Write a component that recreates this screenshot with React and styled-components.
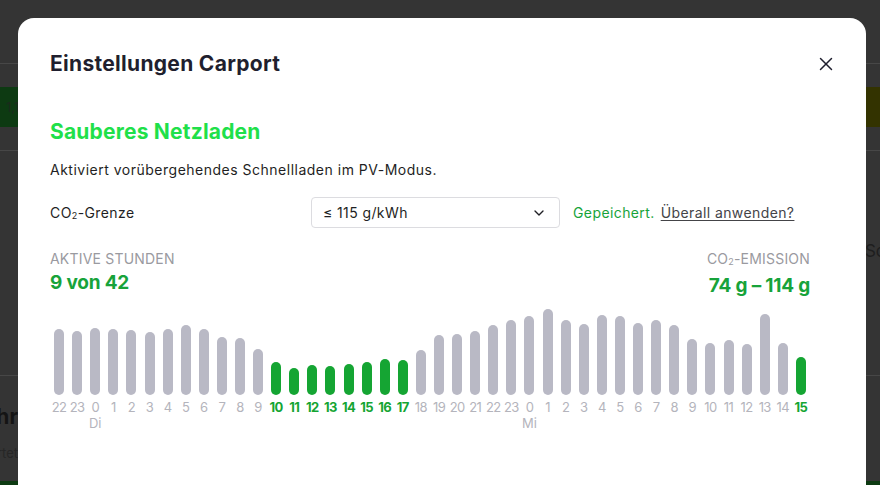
import React from "react";
import styled, { createGlobalStyle } from "styled-components";
import { X, ChevronDown } from "lucide-react";

const hours = [
  { h: "22", v: 66 },
  { h: "23", v: 64 },
  { h: "0", v: 67, day: "Di" },
  { h: "1", v: 66 },
  { h: "2", v: 65 },
  { h: "3", v: 63 },
  { h: "4", v: 66 },
  { h: "5", v: 70 },
  { h: "6", v: 66 },
  { h: "7", v: 58 },
  { h: "8", v: 57 },
  { h: "9", v: 46 },
  { h: "10", v: 33, on: true },
  { h: "11", v: 27, on: true },
  { h: "12", v: 30, on: true },
  { h: "13", v: 29, on: true },
  { h: "14", v: 31, on: true },
  { h: "15", v: 33, on: true },
  { h: "16", v: 36, on: true },
  { h: "17", v: 35, on: true },
  { h: "18", v: 45 },
  { h: "19", v: 60 },
  { h: "20", v: 61 },
  { h: "21", v: 64 },
  { h: "22", v: 70 },
  { h: "23", v: 75 },
  { h: "0", v: 79, day: "Mi" },
  { h: "1", v: 86 },
  { h: "2", v: 75 },
  { h: "3", v: 71 },
  { h: "4", v: 80 },
  { h: "5", v: 79 },
  { h: "6", v: 72 },
  { h: "7", v: 75 },
  { h: "8", v: 70 },
  { h: "9", v: 56 },
  { h: "10", v: 52 },
  { h: "11", v: 55 },
  { h: "12", v: 51 },
  { h: "13", v: 81 },
  { h: "14", v: 52 },
  { h: "15", v: 38, on: true },
];

const App = () => {
  return (
    <>
      <GlobalStyle />
      <Page>
        <PageTop />
        <PageBand>
          <BandLeft>
            <BandText>1,1</BandText>
          </BandLeft>
          <BandRight />
        </PageBand>
        <PageSection>
          <SideText>So</SideText>
        </PageSection>
        <PageFooter>
          <EdgeText $bold>Fahr</EdgeText>
          <EdgeText>Wartet</EdgeText>
          <FooterBar />
        </PageFooter>
      </Page>

      <Overlay>
        <Modal>
          <ModalHeader>
            <ModalTitle>Einstellungen Carport</ModalTitle>
            <CloseButton>
              <X size={22} strokeWidth={1.6} />
            </CloseButton>
          </ModalHeader>

          <ModalBody>
            <SectionTitle>Sauberes Netzladen</SectionTitle>
            <Description>
              Aktiviert vorübergehendes Schnellladen im PV-Modus.
            </Description>

            <SettingRow>
              <SettingLabel>
                CO<Sub>2</Sub>-Grenze
              </SettingLabel>
              <SelectBox>
                <span>≤ 115 g/kWh</span>
                <ChevronDown size={16} strokeWidth={2} />
              </SelectBox>
              <SavedText>Gepeichert.</SavedText>
              <ApplyLink>Überall anwenden?</ApplyLink>
            </SettingRow>

            <StatsRow>
              <Stat>
                <StatLabel>AKTIVE STUNDEN</StatLabel>
                <StatValue>9 von 42</StatValue>
              </Stat>
              <Stat $right>
                <StatLabel>
                  CO<Sub>2</Sub>-EMISSION
                </StatLabel>
                <StatValue>74 g – 114 g</StatValue>
              </Stat>
            </StatsRow>

            <Chart>
              {hours.map((item, i) => (
                <Column key={i}>
                  <BarArea>
                    <Bar $on={item.on} style={{ height: item.v }} />
                  </BarArea>
                  <HourLabel $on={item.on}>{item.h}</HourLabel>
                  <DayLabel>{item.day || ""}</DayLabel>
                </Column>
              ))}
            </Chart>
          </ModalBody>
        </Modal>
      </Overlay>
    </>
  );
};

export default App;

const GlobalStyle = createGlobalStyle`
  html, body {
    margin: 0;
    padding: 0;
    background: #343434;
    overflow: hidden;
  }
  body {
    font-family: Inter, "Open Sans", sans-serif;
  }
`;

//--------background page------------------------

const Page = styled.div`
  height: 485px;
  background: #343434;
  display: flex;
  flex-direction: column;
`;

const PageTop = styled.div`
  height: 63px;
  border-bottom: 1px solid #474747;
`;

const PageBand = styled.div`
  margin-top: 23px;
  height: 40px;
  display: flex;
`;

const BandLeft = styled.div`
  flex: 1;
  background: #0d3a12;
  display: flex;
  align-items: center;
  padding-left: 6px;
`;

const BandRight = styled.div`
  flex: 1;
  background: #333300;
`;

const BandText = styled.span`
  font-size: 13px;
  color: #1c2a1c;
`;

const PageSection = styled.div`
  margin-top: 23px;
  border-top: 1px solid #474747;
  height: 225px;
  display: flex;
  justify-content: flex-end;
  align-items: flex-start;
  padding-top: 90px;
  box-sizing: border-box;
`;

const SideText = styled.span`
  font-size: 17px;
  color: #1e1e1e;
  margin-right: -6px;
`;

const PageFooter = styled.div`
  border-top: 1px solid #474747;
  flex: 1;
  display: flex;
  flex-direction: column;
`;

const EdgeText = styled.div`
  width: 18px;
  display: flex;
  justify-content: flex-end;
  white-space: nowrap;
  margin-top: ${(p) => (p.$bold ? "28px" : "16px")};
  font-size: ${(p) => (p.$bold ? "21px" : "13px")};
  font-weight: ${(p) => (p.$bold ? 700 : 400)};
  color: ${(p) => (p.$bold ? "#141414" : "#262626")};
`;

const FooterBar = styled.div`
  margin-top: auto;
  height: 4px;
  background: #0d3a12;
`;

//--------modal------------------------

const Overlay = styled.div`
  position: fixed;
  inset: 0;
  display: flex;
  justify-content: center;
  align-items: flex-start;
  padding-top: 18px;
`;

const Modal = styled.div`
  width: 848px;
  height: 520px;
  margin-left: 4px;
  background: #ffffff;
  border-radius: 16px;
  box-sizing: border-box;
`;

const ModalHeader = styled.div`
  display: flex;
  justify-content: space-between;
  align-items: center;
  padding: 32px 32px 0 32px;
`;

const ModalTitle = styled.h2`
  margin: 0;
  font-size: 21px;
  line-height: 28px;
  font-weight: 700;
  color: #1f1f2e;
  letter-spacing: 0.3px;
`;

const CloseButton = styled.button`
  display: flex;
  align-items: center;
  justify-content: center;
  width: 24px;
  height: 24px;
  padding: 0;
  margin-right: -4px;
  border: none;
  background: none;
  color: #1f1f2e;
  cursor: pointer;
`;

const ModalBody = styled.div`
  padding: 40px 56px 0 32px;
  display: flex;
  flex-direction: column;
`;

const SectionTitle = styled.h3`
  margin: 0;
  font-size: 21px;
  line-height: 28px;
  font-weight: 700;
  color: #1fe04a;
  letter-spacing: 0.2px;
`;

const Description = styled.p`
  margin: 14px 0 0 0;
  font-size: 14px;
  line-height: 20px;
  letter-spacing: 0.5px;
  color: #1f1f24;
`;

const SettingRow = styled.div`
  display: flex;
  align-items: center;
  margin-top: 17px;
  font-size: 14px;
  letter-spacing: 0.4px;
`;

const SettingLabel = styled.span`
  width: 261px;
  color: #1f1f24;
`;

const Sub = styled.sub`
  font-size: 9px;
  vertical-align: -1px;
`;

const SelectBox = styled.div`
  width: 249px;
  height: 31px;
  box-sizing: border-box;
  border: 1px solid #dcdce0;
  border-radius: 4px;
  display: flex;
  align-items: center;
  justify-content: space-between;
  padding: 0 12px 0 11px;
  color: #1f1f24;
`;

const SavedText = styled.span`
  margin-left: 13px;
  color: #17a33a;
`;

const ApplyLink = styled.a`
  margin-left: 6px;
  color: #444448;
  text-decoration: underline;
  text-underline-offset: 2px;
  cursor: pointer;
`;

const StatsRow = styled.div`
  display: flex;
  justify-content: space-between;
  margin-top: 21px;
`;

const Stat = styled.div`
  display: flex;
  flex-direction: column;
  align-items: ${(p) => (p.$right ? "flex-end" : "flex-start")};
`;

const StatLabel = styled.span`
  font-size: 14px;
  line-height: 20px;
  letter-spacing: 0.2px;
  color: #9a9aa0;
`;

const StatValue = styled.span`
  margin-top: 2px;
  font-size: 19px;
  line-height: 24px;
  font-weight: 700;
  color: #17a33a;
  letter-spacing: -0.2px;
`;

//--------chart------------------------

const Chart = styled.div`
  display: flex;
  margin-top: -3px;
`;

const Column = styled.div`
  flex: 1;
  display: flex;
  flex-direction: column;
  align-items: center;
`;

const BarArea = styled.div`
  height: 100px;
  display: flex;
  align-items: flex-end;
`;

const Bar = styled.div`
  width: 10px;
  border-radius: 5px;
  background: ${(p) => (p.$on ? "#15a533" : "#b9b9c5")};
`;

const HourLabel = styled.span`
  margin-top: 4px;
  font-size: 13px;
  line-height: 16px;
  letter-spacing: -0.6px;
  white-space: nowrap;
  font-weight: ${(p) => (p.$on ? 700 : 400)};
  color: ${(p) => (p.$on ? "#15a533" : "#b4b4bc")};
`;

const DayLabel = styled.span`
  font-size: 13px;
  line-height: 16px;
  height: 16px;
  color: #b4b4bc;
`;
